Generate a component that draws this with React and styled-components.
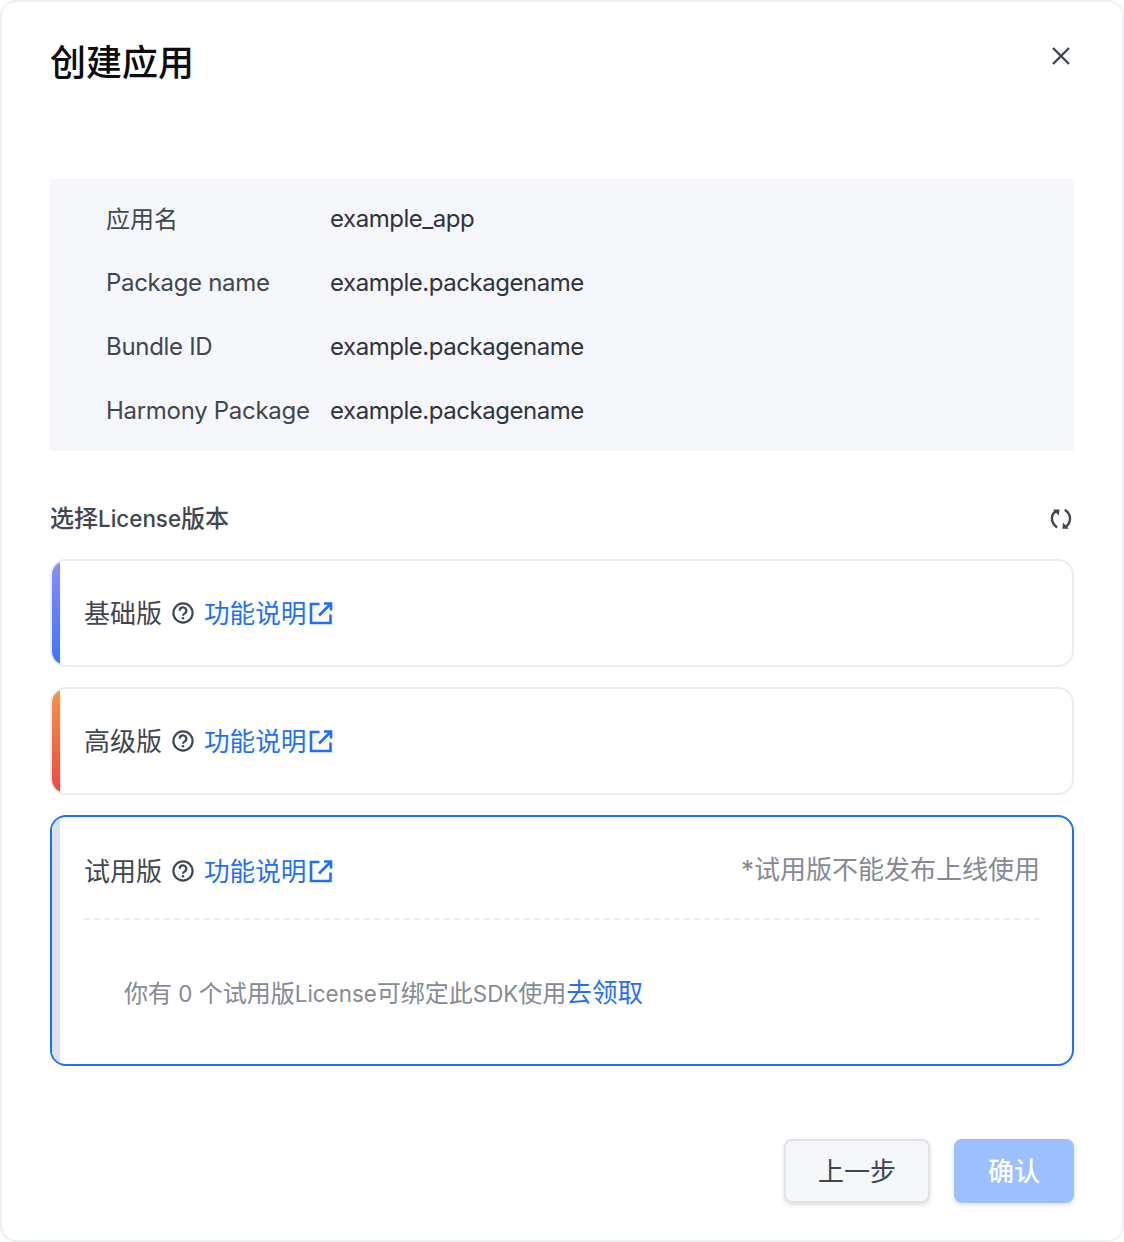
import React from "react";
import styled, { createGlobalStyle } from "styled-components";

const Global = createGlobalStyle`
  html, body { margin: 0; padding: 0; background: #fff; }
  * { box-sizing: border-box; }
  body { font-family: Inter, "Noto Sans CJK SC", sans-serif; }
`;
const Dialog = styled.div`
  width: 1124px; height: 1242px; background: #fff;
  border: 2px solid #edf0f4; border-radius: 16px;
  padding: 0 48px; display: flex; flex-direction: column;
`;
const Header = styled.header`
  height: 177px; display: flex; justify-content: space-between; align-items: flex-start;
  padding-top: 36px;
`;
const Title = styled.h1`
  margin: 0; font-size: 36px; line-height: 50px; font-weight: 500; color: #0a0c10;
`;
const CloseButton = styled.button`
  border: 0; background: none; padding: 0; margin: 6px 1px 0 0; width: 24px; height: 24px; color: #41464f; display: flex;
`;
const InfoPanel = styled.section`
  background: #f5f7fb; padding: 8px 56px; display: flex; flex-direction: column;
`;
const InfoRow = styled.div`
  height: 64px; display: flex; align-items: center; font-size: 24px; color: #41464f;
`;
const InfoLabel = styled.span`
  width: 224px; flex: none; letter-spacing: ${p => (p.$cjk ? "0" : "-0.3px")};
  padding-bottom: ${p => (p.$cjk ? "4px" : "2px")};
`;
const InfoValue = styled.span` color: #2f343c; letter-spacing: -0.46px; padding-bottom: 2px; `;
const SectionHead = styled.div`
  margin-top: 48px; height: 40px; display: flex; align-items: center; justify-content: space-between;
`;
const SectionTitle = styled.h2`
  margin: 0; padding-bottom: 6px; font-size: 24px; font-weight: 500; color: #41464f;
`;
const TitleLatin = styled.span` font-size: 22.4px; `;
const Refresh = styled.span` display: flex; color: #41464f; margin-right: 1px; `;
const Cards = styled.div`
  margin-top: 20px; display: flex; flex-direction: column; gap: 20px;
`;
const Card = styled.div`
  position: relative; overflow: hidden; border-radius: 16px;
  border: 2px solid ${p => (p.$active ? "#1f6fff" : "#e9ecf1")};
  padding-left: 8px; background: #fff;
  &::before {
    content: ""; position: absolute; left: 0; top: 0; bottom: 0; width: 8px;
    background: ${p => p.$bar};
  }
`;
const CardHead = styled.div`
  height: ${p => (p.$tall ? "103px" : "104px")};
  margin: 0 32px 0 24px; display: flex; align-items: center;
  ${p => p.$tall && "border-bottom: 2px dashed #e9ecf1; padding-top: 7px;"}
`;
const PlanName = styled.span` font-size: 26px; color: #41464f; padding-bottom: 4px; `;
const HelpIcon = styled.span` display: flex; margin: 0 10px 0 10px; color: #41464f; `;
const DocLink = styled.a`
  display: flex; align-items: center; gap: 3px; font-size: 25.6px; color: #1f6fff; text-decoration: none;
`;
const LinkText = styled.span` padding-bottom: 4px; `;
const Note = styled.span` margin-left: auto; font-size: 26px; color: #858a94; padding-bottom: 8px; `;
const CardBody = styled.div`
  height: 144px; padding: 0 0 0 64px; display: flex; align-items: center;
  font-size: 24px; color: #858a94;
`;
const BodyText = styled.span` padding-bottom: 4px; `;
const BodyLatin = styled.span` font-size: 22.4px; `;
const ClaimLink = styled.a` color: #1f6fff; text-decoration: none; font-size: 25.6px; `;
const Footer = styled.footer`
  margin-top: 73px; display: flex; justify-content: flex-end; gap: 24px;
`;
const Button = styled.button`
  height: 64px; border-radius: 8px; font: inherit; font-size: 26px; padding: 0 0 4px;
  box-shadow: 0 2px 4px rgba(65, 70, 79, 0.18);
`;
const BackButton = styled(Button)`
  width: 146px; background: #f6f7f9; border: 2px solid #dfe3e9; color: #41464f;
`;
const ConfirmButton = styled(Button)`
  width: 120px; background: #9bbfff; border: 0; color: #fff; font-weight: 500;
`;

const XIcon = () => (
  <svg width="24" height="24" viewBox="0 0 24 24" fill="none" stroke="currentColor" strokeWidth="2.4">
    <path d="M4 4 20 20M20 4 4 20" />
  </svg>
);
const RefreshIcon = () => (
  <svg width="24" height="24" viewBox="0 0 24 24" fill="none" stroke="currentColor" strokeWidth="2.4">
    <path d="M7 4C1.2 8 1.6 15.5 8 20.5" />
    <path d="M15.8 2.8C22.8 7.5 22.5 15.5 16.5 20" />
    <path d="M4 2.5 10.5 2.5 9.8 8.5z" fill="currentColor" stroke="none" />
    <path d="M19.8 21.8 13.4 21.8 14 15.6z" fill="currentColor" stroke="none" />
  </svg>
);
const Help = () => (
  <svg width="22" height="22" viewBox="0 0 22 22" fill="none" stroke="currentColor" strokeWidth="2.2">
    <circle cx="11" cy="11" r="9.6" />
    <path d="M7.7 8.8a3.3 3.3 0 1 1 5 2.7c-1.1.6-1.7 1.1-1.7 2.2" />
    <circle cx="11" cy="16.2" r="1.3" fill="currentColor" stroke="none" />
  </svg>
);
const External = () => (
  <svg width="24" height="24" viewBox="0 0 24 24" fill="none" stroke="currentColor" strokeWidth="2.6">
    <path d="M10.5 3H2v19h19.5v-8.5" />
    <path d="M10 14.5 21.5 3M15 2.5h7v7" />
  </svg>
);

const rows = [
  ["应用名", "example_app", true],
  ["Package name", "example.packagename"],
  ["Bundle ID", "example.packagename"],
  ["Harmony Package", "example.packagename"],
];

const PlanTitle = ({ name }) => (
  <>
    <PlanName>{name}</PlanName>
    <HelpIcon><Help /></HelpIcon>
    <DocLink href="#"><LinkText>功能说明</LinkText><External /></DocLink>
  </>
);

export default function App() {
  return (
    <Dialog>
      <Global />
      <Header>
        <Title>创建应用</Title>
        <CloseButton aria-label="close"><XIcon /></CloseButton>
      </Header>
      <InfoPanel>
        {rows.map(([k, v, cjk]) => (
          <InfoRow key={k}><InfoLabel $cjk={cjk}>{k}</InfoLabel><InfoValue>{v}</InfoValue></InfoRow>
        ))}
      </InfoPanel>
      <SectionHead>
        <SectionTitle>选择<TitleLatin>License</TitleLatin>版本</SectionTitle>
        <Refresh><RefreshIcon /></Refresh>
      </SectionHead>
      <Cards>
        <Card $bar="linear-gradient(180deg,#8c8cff,#3d72ff)">
          <CardHead><PlanTitle name="基础版" /></CardHead>
        </Card>
        <Card $bar="linear-gradient(180deg,#f79540,#f5443f)">
          <CardHead><PlanTitle name="高级版" /></CardHead>
        </Card>
        <Card $active $bar="#dde2ea">
          <CardHead $tall>
            <PlanTitle name="试用版" />
            <Note>*试用版不能发布上线使用</Note>
          </CardHead>
          <CardBody>
            <BodyText>你有<BodyLatin> 0 </BodyLatin>个试用版<BodyLatin>License</BodyLatin>可绑定此<BodyLatin>SDK</BodyLatin>使用<ClaimLink href="#">去领取</ClaimLink></BodyText>
          </CardBody>
        </Card>
      </Cards>
      <Footer>
        <BackButton>上一步</BackButton>
        <ConfirmButton>确认</ConfirmButton>
      </Footer>
    </Dialog>
  );
}
